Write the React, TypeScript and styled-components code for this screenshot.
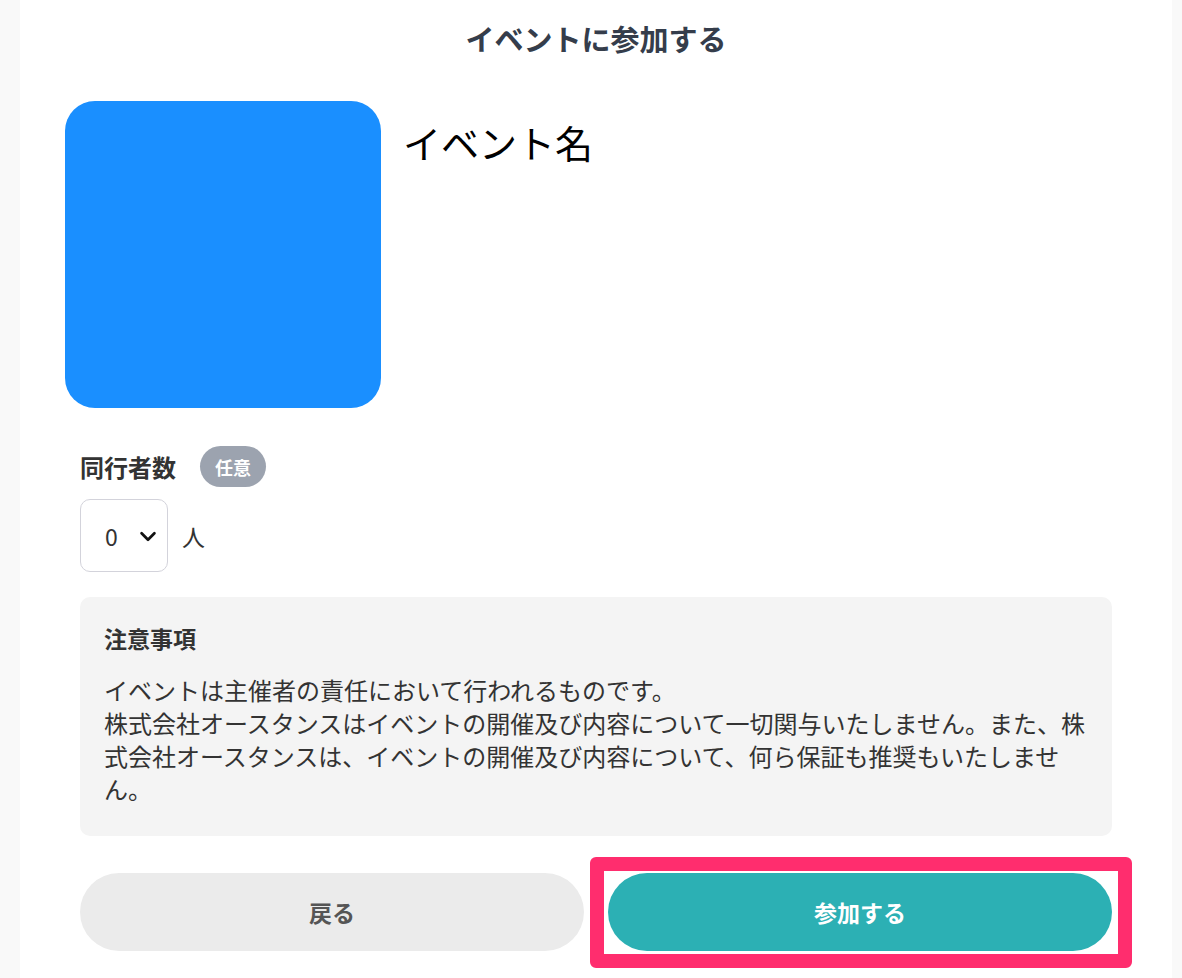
import styled, { createGlobalStyle } from 'styled-components'

const GlobalStyle = createGlobalStyle`
  html, body {
    margin: 0;
    padding: 0;
    background: #f9f9f9;
  }
  body {
    font-family: "Noto Sans CJK JP", "Noto Sans", sans-serif;
    color: #333;
  }
  * {
    box-sizing: border-box;
  }
`

const Page = styled.div`
  min-height: 978px;
  padding: 0 10px 0 20px;
`

const Container = styled.main`
  background: #fff;
  min-height: 978px;
  padding: 18px 60px 40px;
`

const Title = styled.h1`
  margin: 0;
  font-size: 29px;
  line-height: 40px;
  font-weight: 700;
  color: #353d4b;
  text-align: center;
`

const EventRow = styled.section`
  display: flex;
  gap: 22px;
  margin: 43px 0 0 -15px;
`

const Thumbnail = styled.div`
  flex: none;
  width: 316px;
  height: 307px;
  border-radius: 30px;
  background: #1a8fff;
`

const EventName = styled.h2`
  margin: 14px 0 0;
  font-size: 38px;
  line-height: 53px;
  font-weight: 400;
  color: #000;
`

const LabelRow = styled.div`
  display: flex;
  align-items: center;
  gap: 24px;
  margin-top: 38px;
`

const Label = styled.span`
  font-size: 24px;
  font-weight: 700;
  color: #333;
`

const Badge = styled.span`
  display: inline-flex;
  align-items: center;
  justify-content: center;
  width: 66px;
  height: 41px;
  border-radius: 21px;
  background: #9ca3af;
  color: #fff;
  font-size: 18px;
  font-weight: 700;
`

const CountRow = styled.div`
  display: flex;
  align-items: center;
  gap: 14px;
  margin-top: 12px;
`

const SelectWrap = styled.div`
  position: relative;
  width: 88px;
  height: 73px;
`

const Select = styled.select`
  appearance: none;
  width: 100%;
  height: 100%;
  border: 1px solid #d3d3db;
  border-radius: 10px;
  background: #fff;
  padding: 0 0 0 24px;
  font-family: inherit;
  font-size: 23px;
  color: #333;
`

const Chevron = styled.svg`
  position: absolute;
  top: 50%;
  right: 9px;
  width: 22px;
  height: 22px;
  margin-top: -11px;
  pointer-events: none;
`

const Unit = styled.span`
  font-size: 23px;
  color: #333;
`

const Notice = styled.section`
  margin-top: 25px;
  background: #f4f4f4;
  border-radius: 10px;
  padding: 24px 16px 31px 24px;
`

const NoticeTitle = styled.h3`
  margin: 0 0 18px;
  font-size: 23px;
  line-height: 34px;
  font-weight: 700;
  color: #333;
`

const NoticeText = styled.p`
  margin: 0;
  font-size: 24px;
  line-height: 33px;
  color: #333;
`

const Actions = styled.div`
  display: grid;
  grid-template-columns: 1fr 1fr;
  gap: 24px;
  margin-top: 37px;
`

const Highlight = styled.div`
  position: relative;

  &::after {
    content: '';
    position: absolute;
    top: -16px;
    left: -18px;
    right: -20px;
    bottom: -17px;
    border: 14px solid #ff2d6e;
    border-radius: 6px;
    pointer-events: none;
  }
`

const Button = styled.button<{ $primary?: boolean }>`
  display: flex;
  align-items: center;
  justify-content: center;
  width: 100%;
  height: 78px;
  border: none;
  border-radius: 39px;
  background: ${({ $primary }) => ($primary ? '#2cb0b4' : '#ebebeb')};
  color: ${({ $primary }) => ($primary ? '#fff' : '#555')};
  font-family: inherit;
  font-size: 23px;
  font-weight: 700;
  cursor: pointer;
`

function App() {
  return (
    <Page lang="ja">
      <GlobalStyle />
      <Container>
        <Title>イベントに参加する</Title>
        <EventRow>
          <Thumbnail />
          <EventName>イベント名</EventName>
        </EventRow>
        <LabelRow>
          <Label>同行者数</Label>
          <Badge>任意</Badge>
        </LabelRow>
        <CountRow>
          <SelectWrap>
            <Select defaultValue="0">
              {[0, 1, 2, 3, 4, 5].map((n) => (
                <option key={n} value={n}>{n}</option>
              ))}
            </Select>
            <Chevron viewBox="0 0 24 24" fill="none" stroke="#111" strokeWidth="3" strokeLinecap="round" strokeLinejoin="round">
              <polyline points="5 9 12 16 19 9" />
            </Chevron>
          </SelectWrap>
          <Unit>人</Unit>
        </CountRow>
        <Notice>
          <NoticeTitle>注意事項</NoticeTitle>
          <NoticeText>
            イベントは主催者の責任において行われるものです。
            <br />
            株式会社オースタンスはイベントの開催及び内容について一切関与いたしません。また、株式会社オースタンスは、イベントの開催及び内容について、何ら保証も推奨もいたしません。
          </NoticeText>
        </Notice>
        <Actions>
          <Button>戻る</Button>
          <Highlight>
            <Button $primary>参加する</Button>
          </Highlight>
        </Actions>
      </Container>
    </Page>
  )
}

export default App
